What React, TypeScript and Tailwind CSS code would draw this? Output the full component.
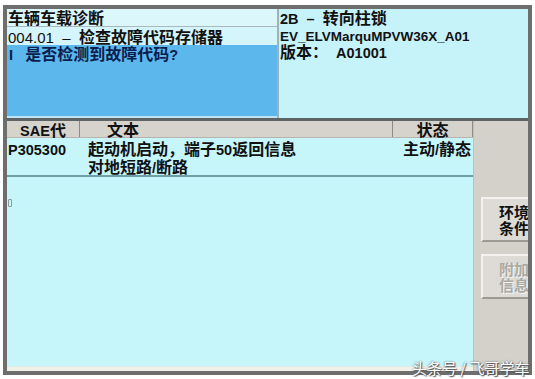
import React from "react";

function L({ children, thin, size }: { children: React.ReactNode; thin?: boolean; size?: "s" | "m" }) {
  return (
    <span
      className={
        thin
          ? "font-['Liberation_Sans',sans-serif] text-[15px] font-normal leading-none"
          : "font-['Liberation_Sans',sans-serif] font-bold leading-none " + (size === "s" ? "text-[13.5px]" : "text-[14.5px]")
      }
    >
      {children}
    </span>
  );
}

export default function App() {
  return (
    <div className="relative w-[535px] h-[379px] bg-white overflow-hidden font-['Noto_Sans_CJK_SC',sans-serif] text-[16px] leading-[17px] font-bold text-[#111]">
      <div className="ml-[3px] mt-[5px] w-[529px] h-[370px] border-t-4 border-l-4 border-r-4 border-b-4 border-[#6e6e6e] flex flex-col">
        {/* top section */}
        <div className="flex h-[109px]">
          <div className="w-[270px] flex flex-col">
            <div className="h-[18px] bg-[#dcf7fb] border-b border-[#a8b8bc] pl-[1px] whitespace-nowrap">
              车辆车载诊断
            </div>
            <div className="h-[18px] bg-[#d4f5fb] pl-[1px] pt-[1px] whitespace-nowrap">
              <L thin>004.01&nbsp;&nbsp;–&nbsp;&nbsp;</L>检查故障代码存储器
            </div>
            <div className="flex-1 bg-[#5bb7ec] text-[#0b1d4e] pl-[2px] whitespace-nowrap border-b-2 border-[#bfe4f3]">
              <div className="h-[17px]">
                <L>I&nbsp;&nbsp;&nbsp;</L>是否检测到故障代码<L>?</L>
              </div>
            </div>
          </div>
          <div className="w-[2px] bg-[#9fb3b8]" />
          <div className="flex-1 bg-[#c6f2fa] pl-[1px] whitespace-nowrap">
            <div className="h-[17px]">
              <L>2B&nbsp;&nbsp;–&nbsp;&nbsp;</L>转向柱锁
            </div>
            <div className="h-[17px]">
              <L size="s">EV_ELVMarquMPVW36X_A01</L>
            </div>
            <div className="h-[17px]">
              版本：<L>&nbsp;&nbsp;A01001</L>
            </div>
          </div>
        </div>
        <div className="h-[3px] bg-[#5e6466]" />
        {/* bottom section */}
        <div className="flex flex-1 min-h-0">
          <div className="w-[466px] flex flex-col bg-[#c6f5fa]">
            <div className="h-[17px] shrink-0 flex bg-[#d6d3cd] border-b border-[#b8b4ac] whitespace-nowrap">
              <div className="w-[73px] text-center border-r border-[#8e8a84]">
                <L>SAE</L>代
              </div>
              <div className="w-[313px] pl-[27px] border-r border-[#8e8a84]">文本</div>
              <div className="flex-1 text-center border-r border-[#8e8a84]">状态</div>
            </div>
            <div className="flex shrink-0 pt-[1px] leading-[18px] border-b-2 border-[#6fa2a8] whitespace-nowrap">
              <div className="w-[81px] pl-[1px] h-[18px]">
                <L>P305300</L>
              </div>
              <div className="flex-1">
                <div className="h-[18px]">
                  起动机启动，端子<L>50</L>返回信息
                </div>
                <div className="h-[18px]">
                  对地短路<L>/</L>断路
                </div>
              </div>
              <div className="pr-[2px] h-[18px]">
                主动<L>/</L>静态
              </div>
            </div>
            <div className="flex-1 pt-[22px] pl-[1px]">
              <div className="w-[4px] h-[8px] border border-[#8a9a9c] rounded-[1px]" />
            </div>
            <div className="h-[5px] bg-[#f1f1ea] border-t border-[#dfe9e6]" />
          </div>
          <div className="flex-1 bg-[#d4d1ca] overflow-hidden pt-[76px] pl-[7px] flex flex-col gap-[12px] border-l border-[#c4c0b8]">
            <div className="w-[64px] h-[45px] shrink-0 bg-[#dddbd5] border-t-2 border-l-2 border-[#f3f2ee] border-b-2 border-b-[#9c9a94] flex items-center justify-center text-center text-[#111] leading-[16px] text-[15px]">
              <div>
                环境
                <br />
                条件
              </div>
            </div>
            <div className="w-[64px] h-[45px] shrink-0 bg-[#dddbd5] border-t-2 border-l-2 border-[#f3f2ee] border-b-2 border-b-[#9c9a94] flex items-center justify-center text-center text-[#a9a9a6] leading-[16px] text-[15px] [text-shadow:1px_1px_0_#f6f6f2]">
              <div>
                附加
                <br />
                信息
              </div>
            </div>
          </div>
        </div>
      </div>
      <div className="absolute left-[412px] top-[359px] text-[15px] leading-[18px] font-normal text-white whitespace-nowrap [text-shadow:0_0_2px_#555,1px_1px_1px_#555]">
        头条号 / 飞哥学车
      </div>
    </div>
  );
}
